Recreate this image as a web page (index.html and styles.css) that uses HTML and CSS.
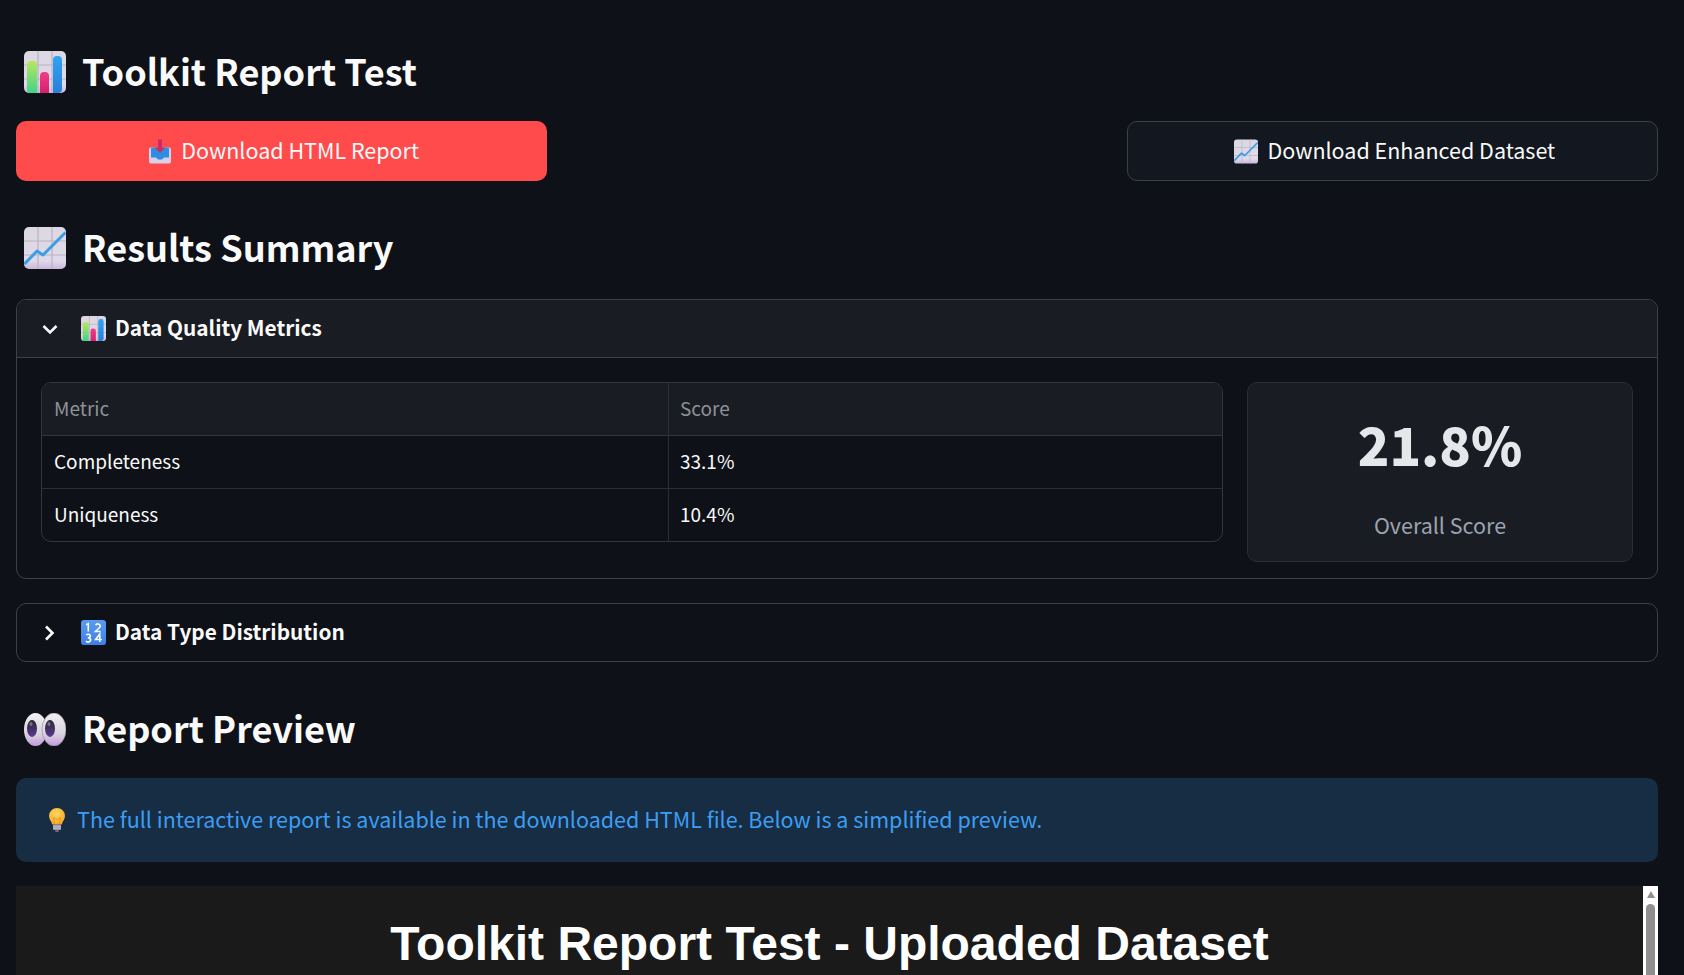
FILE: index.html
```html
<!DOCTYPE html>
<html lang="en">
<head>
<meta charset="utf-8">
<title>Toolkit Report Test</title>
<link rel="stylesheet" href="styles.css">
</head>
<body>
<svg class="sprite" aria-hidden="true">
  <defs>
    <linearGradient id="gTile" x1="0" y1="0" x2="0" y2="1"><stop offset="0" stop-color="#dcd8e2"/><stop offset="0.8" stop-color="#e0d9ea"/><stop offset="1" stop-color="#c9b8dc"/></linearGradient>
    <linearGradient id="gGreen" x1="0" y1="0" x2="0" y2="1"><stop offset="0" stop-color="#b9e85a"/><stop offset="1" stop-color="#3fd48a"/></linearGradient>
    <linearGradient id="gPink" x1="0" y1="0" x2="0" y2="1"><stop offset="0" stop-color="#ee3f86"/><stop offset="1" stop-color="#d81f6e"/></linearGradient>
    <linearGradient id="gBlue" x1="0" y1="0" x2="0" y2="1"><stop offset="0" stop-color="#2fa4f2"/><stop offset="1" stop-color="#2a7fd8"/></linearGradient>
    <linearGradient id="gEye" x1="0" y1="0" x2="0" y2="1"><stop offset="0" stop-color="#f2eff4"/><stop offset="0.65" stop-color="#d8d2dc"/><stop offset="1" stop-color="#c49ade"/></linearGradient>
    <linearGradient id="gPupil" x1="0" y1="0" x2="0" y2="1"><stop offset="0" stop-color="#2a2733"/><stop offset="1" stop-color="#5a3a94"/></linearGradient>
    <linearGradient id="gKeys" x1="0" y1="0" x2="0" y2="1"><stop offset="0" stop-color="#5a9cf0"/><stop offset="1" stop-color="#3e7fe6"/></linearGradient>
    <radialGradient id="gBulb" cx="0.45" cy="0.35" r="0.7"><stop offset="0" stop-color="#ffd75e"/><stop offset="1" stop-color="#f5a623"/></radialGradient>
    <symbol id="i-bars" viewBox="0 0 42 42">
      <rect width="42" height="42" rx="5" fill="url(#gTile)"/>
      <path d="M14 0V42M28 0V42M0 14H42M0 28H42" stroke="#b9b3c2" stroke-width="1.2"/>
      <path d="M3 42V14a4 4 0 0 1 4-4h2a4 4 0 0 1 4 4V42Z" fill="url(#gGreen)"/>
      <path d="M16 42V25a4 4 0 0 1 4-4h1a4 4 0 0 1 4 4V42Z" fill="url(#gPink)"/>
      <path d="M29 42V9a4 4 0 0 1 4-4h1a4 4 0 0 1 4 4V38a4 4 0 0 1-4 4Z" fill="url(#gBlue)"/>
    </symbol>
    <symbol id="i-chart" viewBox="0 0 42 42">
      <rect width="42" height="42" rx="5" fill="url(#gTile)"/>
      <path d="M14 0V42M28 0V42M0 14H42M0 28H42" stroke="#b9b3c2" stroke-width="1.2"/>
      <path d="M0.5 37L13 24L19 28L41.5 5.5" fill="none" stroke="#3a9ee4" stroke-width="3" stroke-linejoin="round"/>
    </symbol>
    <symbol id="i-eyes" viewBox="0 0 42 33">
      <ellipse cx="11.5" cy="16.5" rx="11.5" ry="16.5" fill="url(#gEye)"/>
      <ellipse cx="30" cy="16.5" rx="12" ry="16.5" fill="url(#gEye)"/>
      <ellipse cx="30" cy="16.5" rx="12" ry="16.5" fill="none" stroke="#8d8496" stroke-width="0.6"/>
      <ellipse cx="8" cy="15.5" rx="5" ry="8.5" fill="url(#gPupil)"/>
      <ellipse cx="26" cy="15.5" rx="5" ry="8.5" fill="url(#gPupil)"/>
      <ellipse cx="7" cy="11" rx="1.6" ry="2" fill="#77707f"/>
      <ellipse cx="25" cy="11" rx="1.6" ry="2" fill="#77707f"/>
    </symbol>
    <symbol id="i-inbox" viewBox="0 0 22 24">
      <path d="M2 8h18a2 2 0 0 1 2 2v12a2 2 0 0 1-2 2H2a2 2 0 0 1-2-2V10a2 2 0 0 1 2-2Z" fill="#d9cfe6"/>
      <path d="M3 8h16a1 1 0 0 1 1 1v9h-5l-2 2H9l-2-2H2V9a1 1 0 0 1 1-1Z" fill="#2e8ee4"/>
      <path d="M9 0h4v8h3L11 13.500 6 8H9Z" fill="#cf2a63"/>
    </symbol>
    <symbol id="i-keys" viewBox="0 0 24 24">
      <rect width="24" height="24" rx="3" fill="url(#gKeys)"/>
      <path d="M5 4.500L7 3.500V11M14 5a2.400 2.400 0 0 1 4.500 1c0 1.500-3 3-4.700 5h5M5 14.500a2.400 2.400 0 0 1 4 .5c0 1.500-1.200 2-2.500 2c1.500 0 2.800.7 2.800 2.200a2.500 2.500 0 0 1-4.500 1M18 21V13.500L14 18.800H20" fill="none" stroke="#fff" stroke-width="1.500"/>
    </symbol>
    <symbol id="i-bulb" viewBox="0 0 16 24">
      <path d="M8 0a8 8 0 0 1 8 8c0 3.500-2.500 5.200-3.300 8.500H3.300C2.500 13.200 0 11.500 0 8a8 8 0 0 1 8-8Z" fill="url(#gBulb)"/>
      <path d="M5.500 16L4.500 9.500L8 11.500L11.500 9.500L10.500 16" fill="none" stroke="#e08f20" stroke-width="0.800"/>
      <rect x="4" y="16.500" width="8" height="5.500" rx="1" fill="#9a93a8"/>
      <path d="M4 18.300H12M4 20.200H12" stroke="#d9d4e0" stroke-width="0.700"/>
      <rect x="6" y="22" width="4" height="2" rx="1" fill="#6d6579"/>
    </symbol>
  </defs>
</svg>

<main class="app">
  <h2 class="heading heading-top">
    <svg class="emoji-lg"><use href="#i-bars"/></svg>
    <span>Toolkit Report Test</span>
  </h2>

  <div class="actions">
    <a class="btn btn-primary" href="#">
      <svg class="emoji-btn emoji-inbox"><use href="#i-inbox"/></svg>
      <span>Download HTML Report</span>
    </a>
    <div></div>
    <a class="btn btn-secondary" href="#">
      <svg class="emoji-btn"><use href="#i-chart"/></svg>
      <span>Download Enhanced Dataset</span>
    </a>
  </div>

  <h2 class="heading heading-results">
    <svg class="emoji-lg"><use href="#i-chart"/></svg>
    <span>Results Summary</span>
  </h2>

  <section class="expander">
    <div class="exp-head exp-head-open">
      <svg class="chev" viewBox="0 0 18 18"><path d="M2.500 6L9 12.500L15.500 6" fill="none" stroke="#fafafa" stroke-width="2.600"/></svg>
      <svg class="emoji-sm"><use href="#i-bars"/></svg>
      <span>Data Quality Metrics</span>
    </div>
    <div class="exp-body">
      <div class="table">
        <div class="cell cell-head cell-first">Metric</div>
        <div class="cell cell-head">Score</div>
        <div class="cell cell-first">Completeness</div>
        <div class="cell">33.1%</div>
        <div class="cell cell-first cell-last">Uniqueness</div>
        <div class="cell cell-last">10.4%</div>
      </div>
      <div class="metric">
        <div class="metric-value">21.8%</div>
        <div class="metric-label">Overall Score</div>
      </div>
    </div>
  </section>

  <section class="expander expander-closed">
    <div class="exp-head">
      <svg class="chev" viewBox="0 0 18 18"><path d="M5 2.500L11.500 9L5 15.500" fill="none" stroke="#fafafa" stroke-width="2.600"/></svg>
      <svg class="emoji-sm"><use href="#i-keys"/></svg>
      <span>Data Type Distribution</span>
    </div>
  </section>

  <h2 class="heading heading-preview">
    <svg class="emoji-eyes"><use href="#i-eyes"/></svg>
    <span>Report Preview</span>
  </h2>

  <div class="alert">
    <svg class="emoji-bulb"><use href="#i-bulb"/></svg>
    <span>The full interactive report is available in the downloaded HTML file. Below is a simplified preview.</span>
  </div>

  <div class="frame">
    <div class="frame-content"><h1 class="frame-title">Toolkit Report Test - Uploaded Dataset</h1></div>
    <div class="scrollbar">
      <div class="scroll-arrow"></div>
      <div class="scroll-thumb"></div>
    </div>
  </div>
</main>
</body>
</html>
```

FILE: styles.css
```css
* { box-sizing: border-box; }
html, body { margin: 0; padding: 0; height: 100%; overflow: hidden; background: #0e1117; }
body { font-family: "Noto Sans CJK SC", "Noto Sans", sans-serif; color: #fafafa; }
.sprite { position: absolute; width: 0; height: 0; }

.app { display: flex; flex-direction: column; padding: 0 26px 0 16px; height: 975px; overflow: hidden; }
.app > * { flex: none; }

.heading { display: flex; align-items: center; gap: 16px; margin: 0; padding: 0 0 4px 8px; height: 44px; font-size: 36.100px; font-weight: 600; line-height: 40px; color: #fafafa; }
.heading .emoji-lg, .heading .emoji-eyes { margin-bottom: -4px; }
.heading-top { margin-top: 50px; }
.heading-results { margin-top: 45px; }
.heading-preview { margin-top: 45px; }
.emoji-lg { width: 42px; height: 42px; flex: none; }
.emoji-eyes { width: 42px; height: 33px; flex: none; }

.actions { display: grid; grid-template-columns: repeat(3, 1fr); gap: 24px; margin-top: 27px; }
.btn { display: flex; align-items: center; justify-content: center; gap: 9px; height: 60px; padding: 0 0 2px 5px; border-radius: 10px; font-size: 21.500px; line-height: 30px; color: #fafafa; text-decoration: none; }
.btn-primary { background: #ff4b4b; }
.btn-secondary { background: #13171f; border: 1px solid #3d4045; }
.emoji-btn { width: 24px; height: 25px; flex: none; margin-bottom: -2px; }
.emoji-inbox { width: 22px; margin-right: 1px; }

.expander { flex: none; border: 1px solid #3d4045; border-radius: 10px; overflow: hidden; }
.heading-results + .expander { margin-top: 29px; }
.expander-closed { margin-top: 24px; }
.exp-head { display: flex; align-items: center; height: 57px; padding: 0 0 3px 24px; font-size: 20.800px; font-weight: 600; line-height: 30px; }
.exp-head-open { background: #1a1c24; border-bottom: 1px solid #3d4045; height: 58px; }
.chev { width: 18px; height: 18px; flex: none; margin: 0 22px -3px 0; }
.emoji-sm { width: 25px; height: 25px; flex: none; margin: 0 9px -3px 0; }

.exp-body { display: flex; gap: 24px; padding: 24px 24px 16px; align-items: flex-start; }
.table { flex: none; width: 1182px; display: grid; grid-template-columns: 627px 1fr; border: 1px solid #33363c; border-radius: 10px; overflow: hidden; }
.cell { display: flex; align-items: center; height: 53px; padding: 0 0 2px 11px; font-size: 19px; line-height: 28px; border-bottom: 1px solid #2b2e34; color: #fafafa; }
.cell-first { border-right: 1px solid #2b2e34; padding-left: 12px; }
.cell-head { background: #1a1c24; color: #8e9096; border-bottom-color: #33363c; }
.cell-last { border-bottom: 0; height: 52px; }

.metric { flex: 1; height: 180px; display: flex; flex-direction: column; align-items: center; background: #1a1c24; border: 1px solid #2b2e34; border-radius: 10px; }
.metric-value { margin-top: 26px; font-size: 52px; font-weight: 900; line-height: 70px; color: #e5e7eb; }
.metric-label { margin-top: 30px; font-size: 21.500px; line-height: 32px; color: #9ca3af; }

.alert { display: flex; align-items: center; gap: 12px; height: 84px; margin-top: 27px; padding: 0 0 2px 33px; background: #172d43; border-radius: 10px; font-size: 21.500px; line-height: 32px; color: #3d9df3; }
.emoji-bulb { width: 16px; height: 24px; flex: none; margin-bottom: -2px; }

.frame { flex: none; display: flex; height: 300px; margin-top: 24px; background: #1a1a1a; }
.frame-content { flex: 1; text-align: center; }
.frame-title { margin: 30px 0 0; font-family: "Liberation Sans", Arial, sans-serif; font-size: 48px; font-weight: 700; line-height: 56px; color: #fff; }
.scrollbar { flex: none; width: 15px; background: #fff; padding: 5px 3px 0; display: flex; flex-direction: column; align-items: center; }
.scroll-arrow { width: 0; height: 0; border-left: 4.500px solid transparent; border-right: 4.500px solid transparent; border-bottom: 7px solid #8f8f8f; }
.scroll-thumb { flex: 1; width: 9px; margin-top: 6px; background: #8f8f8f; border-radius: 5px 5px 0 0; }
```
